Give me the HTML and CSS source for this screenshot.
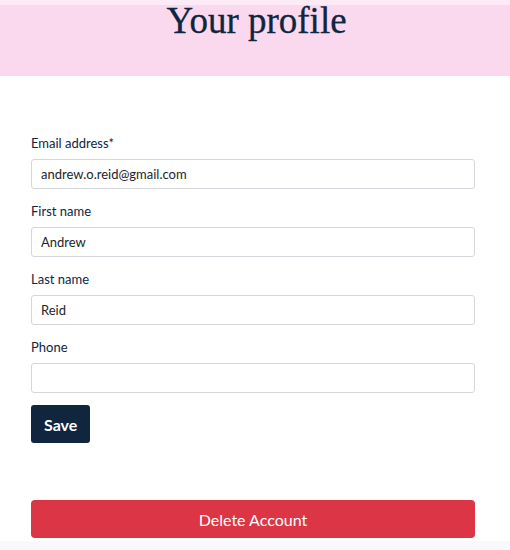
FILE: index.html
```html
<!DOCTYPE html>
<html lang="en">
<head>
<meta charset="utf-8">
<title>Your profile</title>
<link rel="stylesheet" href="styles.css">
</head>
<body>
<header class="hero">
  <div class="hero-strip"></div>
  <h1 class="hero-title">Your profile</h1>
</header>
<main class="content">
  <form class="profile-form">
    <div class="field">
      <label class="field-label" for="email">Email address*</label>
      <input class="field-input" id="email" type="email" value="andrew.o.reid@gmail.com">
    </div>
    <div class="field">
      <label class="field-label" for="first">First name</label>
      <input class="field-input" id="first" type="text" value="Andrew">
    </div>
    <div class="field">
      <label class="field-label" for="last">Last name</label>
      <input class="field-input" id="last" type="text" value="Reid">
    </div>
    <div class="field">
      <label class="field-label" for="phone">Phone</label>
      <input class="field-input" id="phone" type="tel" value="">
    </div>
    <div class="form-actions">
      <button class="btn btn-save" type="button">Save</button>
    </div>
  </form>
  <button class="btn btn-delete" type="button">Delete Account</button>
</main>
<footer class="footer"></footer>
</body>
</html>
```
FILE: styles.css
```css
* { box-sizing: border-box; }
html, body { margin: 0; padding: 0; }
body {
  background: #ffffff;
  font-family: Lato, "Open Sans", sans-serif;
  color: #0f2540;
  width: 510px;
  height: 550px;
  overflow: hidden;
  display: flex;
  flex-direction: column;
}
.hero {
  position: relative;
  background: #fad9ef;
  height: 76px;
  text-align: center;
}
.hero-strip {
  position: absolute;
  left: 0; right: 0; top: 0;
  height: 5px;
  background: rgba(255,255,255,0.45);
}
.hero-title {
  margin: 0;
  font-family: "Liberation Serif", "Times New Roman", serif;
  font-weight: 400;
  font-size: 37px;
  line-height: 41px;
  color: #0f2540;
  padding-left: 3px;
  -webkit-text-stroke: 0.3px #0f2540;
}
.content {
  padding: 59px 35px 0 31px;
  flex: 1;
}
.profile-form {
  display: flex;
  flex-direction: column;
}
.field {
  display: flex;
  flex-direction: column;
  margin-bottom: 14px;
}
.field-label {
  font-size: 13px;
  line-height: 16px;
  margin-bottom: 8px;
  color: #0f2540;
}
.field-input {
  height: 30px;
  width: 100%;
  border: 1px solid #d3d7dc;
  border-radius: 3px;
  padding: 0 9px;
  font-family: Lato, sans-serif;
  font-size: 13px;
  color: #212529;
  background: #fff;
  outline: none;
}
.form-actions {
  margin-top: -2px;
}
.btn {
  font-family: Lato, sans-serif;
  border: none;
  cursor: pointer;
  color: #ffffff;
}
.btn-save {
  background: #10263f;
  height: 38px;
  padding: 0 13px;
  border-radius: 3px;
  font-size: 16px;
  font-weight: 700;
}
.btn-delete {
  display: block;
  margin-top: 57px;
  width: 100%;
  height: 38px;
  background: #dc3545;
  border-radius: 4px;
  font-size: 16px;
  font-weight: 400;
}
.footer {
  height: 9px;
  background: #f8f9fa;
}
```
